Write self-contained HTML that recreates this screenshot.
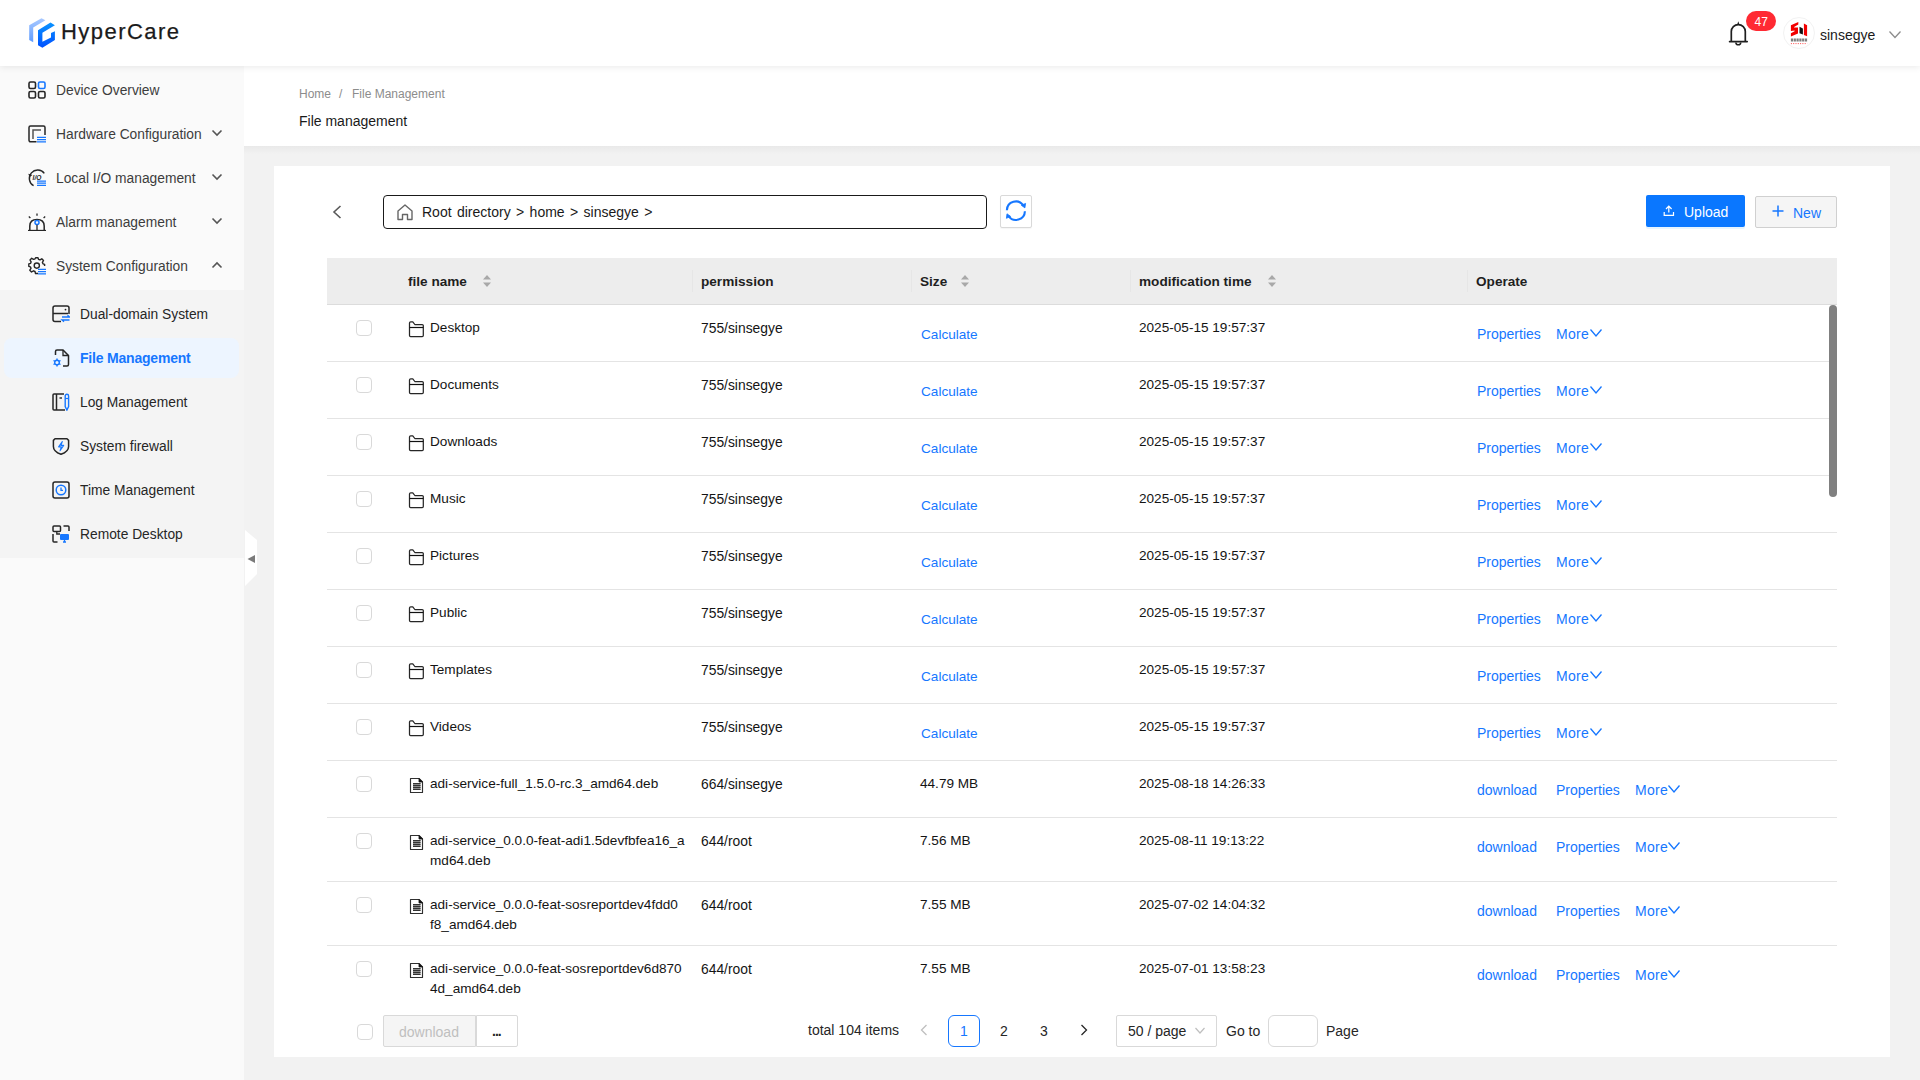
<!DOCTYPE html><html><head><meta charset="utf-8"><style>
html,body{margin:0;padding:0;width:1920px;height:1080px;overflow:hidden;background:#f2f2f2;font-family:"Liberation Sans", sans-serif;}
.t{position:absolute;white-space:nowrap;}
</style></head><body>
<div style="position:absolute;left:0px;top:66px;width:244px;height:1014px;background:#fafafa"></div>
<div style="position:absolute;left:0px;top:290px;width:244px;height:268px;background:#f4f4f4"></div>
<div style="position:absolute;left:244px;top:66px;width:1676px;height:80px;background:#fff"></div>
<div style="position:absolute;left:244px;top:146px;width:1676px;height:8px;background:linear-gradient(#e9e9e9,#f2f2f2)"></div>
<div style="position:absolute;left:0px;top:0px;width:1920px;height:66px;background:#fff;box-shadow:0 1px 7px rgba(0,0,0,0.09)"></div>
<svg style="position:absolute;left:26px;top:14px" width="34" height="38" viewBox="0 0 34 38" fill="none"><defs><linearGradient id="lg1" x1="0" y1="0" x2="0" y2="1"><stop offset="0" stop-color="#a9c9ff"/><stop offset="1" stop-color="#5e9cff"/></linearGradient>
<linearGradient id="lg2" x1="0" y1="0" x2="0" y2="1"><stop offset="0" stop-color="#0a93ff"/><stop offset="1" stop-color="#0050ff"/></linearGradient></defs>
<polygon fill="url(#lg1)" points="3.2,11.3 15.5,4.2 19.4,6.3 7.2,13.6 7.2,28.2 3.2,26"/>
<polygon fill="url(#lg2)" points="12,16.2 24.5,8.6 28.9,11.3 16.4,18.7 16.4,27.8 25,23.6 25,19 28.9,17.3 28.9,26 16.4,33.8 12,31.3"/></svg>
<div class="t" style="left:61px;top:21.00px;font-size:22px;line-height:22px;color:#1a1a1a;font-weight:normal;letter-spacing:1.45px;-webkit-text-stroke:0.25px #1a1a1a">HyperCare</div>
<svg style="position:absolute;left:1722px;top:8px" width="30" height="40" viewBox="0 0 30 40" fill="none"><path d="M9.3 33.6 V23.6 A7 7 0 0 1 23.3 23.6 V33.6" stroke="#1f1f1f" stroke-width="1.7"/>
<path d="M7.6 33.6 H25.2" stroke="#1f1f1f" stroke-width="1.7" stroke-linecap="round"/><path d="M15 16.9 L16.3 13.2 L17.6 16.9 Z" fill="#1f1f1f"/><path d="M13.9 34.4 A2.4 2.4 0 0 0 18.7 34.4" stroke="#1f1f1f" stroke-width="1.5"/></svg>
<div style="position:absolute;left:1746px;top:11px;width:29.5px;height:20px;background:#ff2a33;border-radius:10px"></div>
<div class="t" style="left:1754.5px;top:16.00px;font-size:12px;line-height:12px;color:#fff;font-weight:normal;">47</div>
<div style="position:absolute;left:1783px;top:17px;width:32px;height:32px;box-sizing:border-box;background:#fff;border-radius:50%;border:1px solid #f2f2f2"></div>
<svg style="position:absolute;left:1780px;top:14px" width="40" height="38" viewBox="0 0 40 38" fill="none"><path d="M10.9 11.3 L18.3 7.9 V10.6 L14.1 13 V13.6 L18 13.4 V19.5 L10.9 22.5 V19.2 L14.6 17.3 V16.4 L10.9 16.9 Z" fill="#f20000"/>
<path d="M19.5 12.7 L22.9 14.4 V20.6 L19.5 19.2 Z" fill="#111"/><path d="M23.9 9.5 L27.1 11.3 V22.2 L23.9 21.1 Z" fill="#f20000"/>
<path d="M10.9 25.9 H27.1" stroke="#666" stroke-width="3" stroke-dasharray="2.2,0.6" opacity="0.85"/><path d="M10.9 29.6 H27.1" stroke="#f33" stroke-width="0.9" stroke-dasharray="1,1.3"/></svg>
<div class="t" style="left:1820px;top:28.00px;font-size:14px;line-height:14px;color:#1a1a1a;font-weight:normal;">sinsegye</div>
<svg style="position:absolute;left:1888px;top:30px" width="14" height="10" viewBox="0 0 14 10" fill="none"><path d="M1.5 1.5 L7 7.5 L12.5 1.5" stroke="#8c8c8c" stroke-width="1.3"/></svg>
<div class="t" style="left:56px;top:84.00px;font-size:13.8px;line-height:13.8px;color:#3d3d3d;font-weight:normal;">Device Overview</div>
<div class="t" style="left:56px;top:128.00px;font-size:13.8px;line-height:13.8px;color:#3d3d3d;font-weight:normal;">Hardware Configuration</div>
<svg style="position:absolute;left:211px;top:129px" width="12" height="8"><path d="M1.5 1.5 L6 6 L10.5 1.5" fill="none" stroke="#555" stroke-width="1.6"/></svg>
<div class="t" style="left:56px;top:172.00px;font-size:13.8px;line-height:13.8px;color:#3d3d3d;font-weight:normal;">Local I/O management</div>
<svg style="position:absolute;left:211px;top:173px" width="12" height="8"><path d="M1.5 1.5 L6 6 L10.5 1.5" fill="none" stroke="#555" stroke-width="1.6"/></svg>
<div class="t" style="left:56px;top:216.00px;font-size:13.8px;line-height:13.8px;color:#3d3d3d;font-weight:normal;">Alarm management</div>
<svg style="position:absolute;left:211px;top:217px" width="12" height="8"><path d="M1.5 1.5 L6 6 L10.5 1.5" fill="none" stroke="#555" stroke-width="1.6"/></svg>
<div class="t" style="left:56px;top:260.00px;font-size:13.8px;line-height:13.8px;color:#3d3d3d;font-weight:normal;">System Configuration</div>
<svg style="position:absolute;left:211px;top:261px" width="12" height="8"><path d="M1.5 6.5 L6 2 L10.5 6.5" fill="none" stroke="#555" stroke-width="1.6"/></svg>
<svg style="position:absolute;left:28px;top:81px" width="18" height="18" viewBox="0 0 18 18" fill="none"><rect x="1" y="1" width="6.5" height="6.5" rx="1.5" stroke="#262626" stroke-width="1.6"/><rect x="10.5" y="1" width="6.5" height="6.5" rx="1.5" stroke="#1677ff" stroke-width="1.6"/>
<rect x="1" y="10.5" width="6.5" height="6.5" rx="1.5" stroke="#262626" stroke-width="1.6"/><rect x="10.5" y="10.5" width="6.5" height="6.5" rx="1.5" stroke="#262626" stroke-width="1.6"/></svg>
<svg style="position:absolute;left:28px;top:125px" width="18" height="18" viewBox="0 0 18 18" fill="none"><path d="M8.5 16.8 H2.5 A1.5 1.5 0 0 1 1 15.3 V2.5 A1.5 1.5 0 0 1 2.5 1 H15.5 A1.5 1.5 0 0 1 17 2.5 V10" stroke="#262626" stroke-width="1.5"/>
<path d="M5 14 V5 H13" stroke="#555" stroke-width="1.5"/><path d="M9 12.3 H18 M9 14.6 H18 M9 16.9 H18" stroke="#1677ff" stroke-width="1.25"/></svg>
<svg style="position:absolute;left:28px;top:169px" width="18" height="18" viewBox="0 0 18 18" fill="none"><path d="M16.3 4.4 A8.3 8.3 0 1 0 5.6 16.6" stroke="#262626" stroke-width="1.4"/><path d="M0.3 4.8 L1.6 8.2 L4.4 5.9 Z" fill="#262626"/>
<text x="4.6" y="10.6" font-size="6.6" font-weight="bold" fill="#262626" font-family="Liberation Sans" font-style="italic">I/O</text><path d="M9 12.1 H18 M9 14.2 H18 M9 16.3 H18" stroke="#1677ff" stroke-width="1.2"/></svg>
<svg style="position:absolute;left:28px;top:213px" width="18" height="18" viewBox="0 0 18 18" fill="none"><path d="M1.8 17.6 V13 C1.8 8.6 5 6.5 9 6.5 C13 6.5 16.2 8.6 16.2 13 V17.6" stroke="#262626" stroke-width="1.5"/><path d="M0 17.6 H18" stroke="#262626" stroke-width="1.5"/>
<path d="M9 0.5 V2.8 M0.8 3.6 L2.4 5 M17.2 3.6 L15.6 5" stroke="#262626" stroke-width="1.3"/><circle cx="9" cy="9.6" r="2" stroke="#1677ff" stroke-width="1.5"/><path d="M9 11.8 V17.6" stroke="#262626" stroke-width="1.3"/></svg>
<svg style="position:absolute;left:28px;top:257px" width="18" height="18" viewBox="0 0 18 18" fill="none"><path d="M10 16.5 L7.5 16.5 L7 14.5 L5.5 13.8 L3.5 15 L1.8 13.2 L3 11.3 L2.4 9.8 L0.8 9.3 V6.9 L2.5 6.4 L3.1 4.9 L2 3 L3.7 1.3 L5.6 2.4 L7.1 1.8 L7.6 0.8 H10 L10.5 2.3 L12 2.9 L13.8 1.8 L15.5 3.5 L14.4 5.4 L15 6.8 L16.6 7.3 V9" stroke="#262626" stroke-width="1.4" stroke-linejoin="round"/>
<circle cx="8.8" cy="8.6" r="2.6" stroke="#262626" stroke-width="1.4"/><path d="M10 12.3 H18 M10 14.6 H18 M10 16.9 H18" stroke="#1677ff" stroke-width="1.25"/></svg>
<div style="position:absolute;left:4px;top:338px;width:235px;height:40px;background:#edf5ff;border-radius:8px"></div>
<div class="t" style="left:80px;top:308.00px;font-size:13.8px;line-height:13.8px;color:#262626;font-weight:normal;">Dual-domain System</div>
<div class="t" style="left:80px;top:351.00px;font-size:14px;line-height:14px;color:#1677ff;font-weight:bold;letter-spacing:-0.2px">File Management</div>
<div class="t" style="left:80px;top:396.00px;font-size:13.8px;line-height:13.8px;color:#262626;font-weight:normal;">Log Management</div>
<div class="t" style="left:80px;top:440.00px;font-size:13.8px;line-height:13.8px;color:#262626;font-weight:normal;">System firewall</div>
<div class="t" style="left:80px;top:484.00px;font-size:13.8px;line-height:13.8px;color:#262626;font-weight:normal;">Time Management</div>
<div class="t" style="left:80px;top:528.00px;font-size:13.8px;line-height:13.8px;color:#262626;font-weight:normal;">Remote Desktop</div>
<svg style="position:absolute;left:52px;top:305px" width="18" height="18" viewBox="0 0 18 18" fill="none"><path d="M9 16.5 H3 A2 2 0 0 1 1 14.5 V3 A2 2 0 0 1 3 1 H15 A2 2 0 0 1 17 3 V9" stroke="#262626" stroke-width="1.5"/><path d="M1 8.5 H16" stroke="#262626" stroke-width="1.5"/><circle cx="13.5" cy="4.6" r="0.9" fill="#262626"/>
<path d="M10 12 H17.5 L15.5 10.2 M17.5 15 H10 L12 16.8" stroke="#1677ff" stroke-width="1.3"/></svg>
<svg style="position:absolute;left:52px;top:349px" width="18" height="18" viewBox="0 0 18 18" fill="none"><path d="M3.5 6 V2.5 A1.5 1.5 0 0 1 5 1 H11 L16.5 6.5 V15.5 A1.5 1.5 0 0 1 15 17 H11" stroke="#262626" stroke-width="1.5"/><path d="M11 1 V6.5 H16.5" stroke="#262626" stroke-width="1.3"/>
<path d="M5 9.5 V17.5 M1.5 11.5 L8.5 15.5 M1.5 15.5 L8.5 11.5" stroke="#1677ff" stroke-width="1.4"/><circle cx="5" cy="13.5" r="2.3" fill="#edf5ff" stroke="#1677ff" stroke-width="1.4"/></svg>
<svg style="position:absolute;left:52px;top:393px" width="18" height="18" viewBox="0 0 18 18" fill="none"><path d="M13 17 H2 A1 1 0 0 1 1 16 V2 A1 1 0 0 1 2 1 H12" stroke="#262626" stroke-width="1.5"/><path d="M4.5 1 V17" stroke="#262626" stroke-width="1.5"/><path d="M7.5 5 H10" stroke="#262626" stroke-width="1.4"/>
<path d="M13.2 3 A1.7 1.7 0 0 1 16.6 3 V13.5 L14.9 17 L13.2 13.5 Z" stroke="#1677ff" stroke-width="1.4"/><path d="M13.2 5.5 H16.6" stroke="#1677ff" stroke-width="1.2"/></svg>
<svg style="position:absolute;left:52px;top:437px" width="18" height="18" viewBox="0 0 18 18" fill="none"><path d="M3 1.8 H15 L16.6 3.4 V9.5 C16.6 13.3 13 15.9 9 17.3 C5 15.9 1.4 13.3 1.4 9.5 V3.4 Z" stroke="#262626" stroke-width="1.5" stroke-linejoin="round"/><path d="M10.3 4.6 L6.6 9.9 H9.3 L8 13.8 L11.7 8.4 H9 Z" stroke="#1677ff" stroke-width="1.1" stroke-linejoin="round"/></svg>
<svg style="position:absolute;left:52px;top:481px" width="18" height="18" viewBox="0 0 18 18" fill="none"><rect x="1" y="1" width="16" height="16" rx="2" stroke="#262626" stroke-width="1.5"/><circle cx="9" cy="9" r="4.8" stroke="#1677ff" stroke-width="1.5"/><path d="M9 6.5 V9.3 H11" stroke="#1677ff" stroke-width="1.3"/></svg>
<svg style="position:absolute;left:52px;top:525px" width="18" height="18" viewBox="0 0 18 18" fill="none"><rect x="1" y="1" width="7.5" height="5.5" rx="1" stroke="#262626" stroke-width="1.5"/><path d="M11.5 1 H16 A1 1 0 0 1 17 2 V6" stroke="#262626" stroke-width="1.5"/><path d="M1 9 V16 A1 1 0 0 0 2 17 H5.5" stroke="#262626" stroke-width="1.5"/>
<rect x="8" y="9" width="9" height="6" rx="1" fill="#1677ff"/><path d="M11 17 H14 M12.5 15 V17" stroke="#1677ff" stroke-width="1.3"/><path d="M4.8 6.5 V9 H8" stroke="#262626" stroke-width="1.3"/></svg>
<svg style="position:absolute;left:245px;top:530px" width="14" height="56" viewBox="0 0 14 56" fill="none"><path d="M0 0 L12 10 V44 L0 56 Z" fill="#fff"/><path d="M2.5 29 L10 25 V33 Z" fill="#7a7a7a"/></svg>
<div class="t" style="left:299px;top:88.00px;font-size:12px;line-height:12px;color:#8c8c8c;font-weight:normal;">Home</div>
<div class="t" style="left:339px;top:88.00px;font-size:12px;line-height:12px;color:#8c8c8c;font-weight:normal;">/</div>
<div class="t" style="left:352px;top:88.00px;font-size:12px;line-height:12px;color:#8c8c8c;font-weight:normal;">File Management</div>
<div class="t" style="left:299px;top:114.00px;font-size:14px;line-height:14px;color:#1a1a1a;font-weight:normal;">File management</div>
<div style="position:absolute;left:274px;top:166px;width:1616px;height:891px;background:#fff"></div>
<svg style="position:absolute;left:330px;top:204px" width="14" height="16" viewBox="0 0 14 16" fill="none"><path d="M10.5 2 L4 8 L10.5 14" stroke="#595959" stroke-width="1.6"/></svg>
<div style="position:absolute;left:383px;top:195px;width:602px;height:32px;border:1.5px solid #1a1a1a;border-radius:4px;background:#fff"></div>
<svg style="position:absolute;left:396px;top:203px" width="18" height="18" viewBox="0 0 18 18" fill="none"><path d="M2 16.5 V8 L9 2 L16 8 V16.5 H11.5 V11.5 H6.5 V16.5 Z" stroke="#666" stroke-width="1.4" stroke-linejoin="round"/></svg>
<div class="t" style="left:422px;top:205.00px;font-size:14px;line-height:14px;color:#1a1a1a;font-weight:normal;word-spacing:1.5px">Root directory &gt; home &gt; sinsegye &gt;</div>
<div style="position:absolute;left:1000px;top:195px;width:30px;height:31px;border:1px solid #d9d9d9;border-radius:2px;background:#fff;box-shadow:0 1px 1px rgba(0,0,0,0.04)"></div>
<svg style="position:absolute;left:1004px;top:199px" width="24" height="24" viewBox="0 0 24 24" fill="none"><path d="M2.9 11.2 A8.9 8.9 0 0 1 19.3 6.6" stroke="#1677ff" stroke-width="2.1"/><path d="M20.9 12.3 A8.9 8.9 0 0 1 4.6 17" stroke="#1677ff" stroke-width="2.1"/><path d="M17.3 6.2 L21.6 4.4 L20.9 8.9 Z" fill="#1677ff" stroke="#1677ff" stroke-width="0.8" stroke-linejoin="round"/><path d="M6.6 17.4 L2.4 19.3 L3 14.8 Z" fill="#1677ff" stroke="#1677ff" stroke-width="0.8" stroke-linejoin="round"/></svg>
<div style="position:absolute;left:1646px;top:195px;width:99px;height:32px;background:#0a77ff;border-radius:2px;box-shadow:0 2px 0 rgba(5,145,255,0.1)"></div>
<svg style="position:absolute;left:1660px;top:200px" width="20" height="20" viewBox="0 0 20 20" fill="none"><path d="M8.8 12.6 V6.3 M6 9 L8.8 6.2 L11.6 9" stroke="#fff" stroke-width="1.2"/><path d="M4.2 12 V15.4 H13.5 V12" stroke="#fff" stroke-width="1.2"/></svg>
<div class="t" style="left:1684px;top:205.00px;font-size:14px;line-height:14px;color:#fff;font-weight:normal;">Upload</div>
<div style="position:absolute;left:1755px;top:196px;width:80px;height:30px;background:#f5f5f5;border:1px solid #d0d0d0;border-radius:2px"></div>
<svg style="position:absolute;left:1771px;top:204px" width="14" height="14" viewBox="0 0 14 14" fill="none"><path d="M7 1.5 V12.5 M1.5 7 H12.5" stroke="#1677ff" stroke-width="1.5"/></svg>
<div class="t" style="left:1793px;top:206.00px;font-size:14px;line-height:14px;color:#1677ff;font-weight:normal;">New</div>
<div style="position:absolute;left:327px;top:258px;width:1510px;height:46px;background:#ededed"></div>
<div style="position:absolute;left:327px;top:304px;width:1510px;height:1px;background:#dcdcdc"></div>
<div style="position:absolute;left:692px;top:270px;width:1px;height:22px;background:#e6e6e6"></div>
<div style="position:absolute;left:911px;top:270px;width:1px;height:22px;background:#e6e6e6"></div>
<div style="position:absolute;left:1130px;top:270px;width:1px;height:22px;background:#e6e6e6"></div>
<div style="position:absolute;left:1467px;top:270px;width:1px;height:22px;background:#e6e6e6"></div>
<div class="t" style="left:408px;top:275.00px;font-size:13.6px;line-height:13.6px;color:#1f1f1f;font-weight:bold;">file name</div>
<svg style="position:absolute;left:482px;top:274px" width="10" height="14" viewBox="0 0 10 14" fill="none"><path d="M5 1 L9 5.5 H1 Z" fill="#a8a8a8"/><path d="M5 13 L9 8.5 H1 Z" fill="#a8a8a8"/></svg>
<div class="t" style="left:701px;top:275.00px;font-size:13.6px;line-height:13.6px;color:#1f1f1f;font-weight:bold;">permission</div>
<div class="t" style="left:920px;top:275.00px;font-size:13.6px;line-height:13.6px;color:#1f1f1f;font-weight:bold;">Size</div>
<svg style="position:absolute;left:960px;top:274px" width="10" height="14" viewBox="0 0 10 14" fill="none"><path d="M5 1 L9 5.5 H1 Z" fill="#a8a8a8"/><path d="M5 13 L9 8.5 H1 Z" fill="#a8a8a8"/></svg>
<div class="t" style="left:1139px;top:275.00px;font-size:13.6px;line-height:13.6px;color:#1f1f1f;font-weight:bold;">modification time</div>
<svg style="position:absolute;left:1267px;top:274px" width="10" height="14" viewBox="0 0 10 14" fill="none"><path d="M5 1 L9 5.5 H1 Z" fill="#a8a8a8"/><path d="M5 13 L9 8.5 H1 Z" fill="#a8a8a8"/></svg>
<div class="t" style="left:1476px;top:275.00px;font-size:13.6px;line-height:13.6px;color:#1f1f1f;font-weight:bold;">Operate</div>
<div style="position:absolute;left:327px;top:305px;width:1510px;height:704px;overflow:hidden">
<div style="position:absolute;left:29px;top:15px;width:16px;height:16px;box-sizing:border-box;border:1px solid #d9d9d9;border-radius:4px;background:#fff"></div>
<svg style="position:absolute;left:78px;top:11px" width="24" height="24" viewBox="0 0 24 24" fill="none"><path d="M4.5 7 Q4.5 5.8 5.7 5.8 H7.8 L9.8 8.5 H17.2 Q18.3 8.5 18.3 9.6 V19.5 Q18.3 20.6 17.2 20.6 H5.6 Q4.5 20.6 4.5 19.5 Z" stroke="#262626" stroke-width="1.25" stroke-linejoin="round"/><path d="M4.5 11.5 H18.3" stroke="#111" stroke-width="1.2"/></svg>
<div class="t" style="left:103px;top:16.00px;font-size:13.6px;line-height:13.6px;color:#141414;font-weight:normal;">Desktop</div>
<div class="t" style="left:374px;top:17.00px;font-size:13.85px;line-height:13.85px;color:#141414;font-weight:normal;">755/sinsegye</div>
<div class="t" style="left:594px;top:23.00px;font-size:13.6px;line-height:13.6px;color:#1677ff;font-weight:normal;">Calculate</div>
<div class="t" style="left:812px;top:16.00px;font-size:13.6px;line-height:13.6px;color:#141414;font-weight:normal;">2025-05-15 19:57:37</div>
<div class="t" style="left:1150px;top:22.00px;font-size:14px;line-height:14px;color:#1677ff;font-weight:normal;">Properties</div>
<div class="t" style="left:1229px;top:22.00px;font-size:14px;line-height:14px;color:#1677ff;font-weight:normal;letter-spacing:0.3px">More</div>
<svg style="position:absolute;left:1262px;top:23px" width="14" height="10" viewBox="0 0 14 10" fill="none"><path d="M1.5 1.5 L7 8 L12.5 1.5" stroke="#1677ff" stroke-width="1.3"/></svg>
<div style="position:absolute;left:0px;top:56px;width:1510px;height:1px;background:#e4e4e4"></div>
<div style="position:absolute;left:29px;top:72px;width:16px;height:16px;box-sizing:border-box;border:1px solid #d9d9d9;border-radius:4px;background:#fff"></div>
<svg style="position:absolute;left:78px;top:68px" width="24" height="24" viewBox="0 0 24 24" fill="none"><path d="M4.5 7 Q4.5 5.8 5.7 5.8 H7.8 L9.8 8.5 H17.2 Q18.3 8.5 18.3 9.6 V19.5 Q18.3 20.6 17.2 20.6 H5.6 Q4.5 20.6 4.5 19.5 Z" stroke="#262626" stroke-width="1.25" stroke-linejoin="round"/><path d="M4.5 11.5 H18.3" stroke="#111" stroke-width="1.2"/></svg>
<div class="t" style="left:103px;top:73.00px;font-size:13.6px;line-height:13.6px;color:#141414;font-weight:normal;">Documents</div>
<div class="t" style="left:374px;top:74.00px;font-size:13.85px;line-height:13.85px;color:#141414;font-weight:normal;">755/sinsegye</div>
<div class="t" style="left:594px;top:80.00px;font-size:13.6px;line-height:13.6px;color:#1677ff;font-weight:normal;">Calculate</div>
<div class="t" style="left:812px;top:73.00px;font-size:13.6px;line-height:13.6px;color:#141414;font-weight:normal;">2025-05-15 19:57:37</div>
<div class="t" style="left:1150px;top:79.00px;font-size:14px;line-height:14px;color:#1677ff;font-weight:normal;">Properties</div>
<div class="t" style="left:1229px;top:79.00px;font-size:14px;line-height:14px;color:#1677ff;font-weight:normal;letter-spacing:0.3px">More</div>
<svg style="position:absolute;left:1262px;top:80px" width="14" height="10" viewBox="0 0 14 10" fill="none"><path d="M1.5 1.5 L7 8 L12.5 1.5" stroke="#1677ff" stroke-width="1.3"/></svg>
<div style="position:absolute;left:0px;top:113px;width:1510px;height:1px;background:#e4e4e4"></div>
<div style="position:absolute;left:29px;top:129px;width:16px;height:16px;box-sizing:border-box;border:1px solid #d9d9d9;border-radius:4px;background:#fff"></div>
<svg style="position:absolute;left:78px;top:125px" width="24" height="24" viewBox="0 0 24 24" fill="none"><path d="M4.5 7 Q4.5 5.8 5.7 5.8 H7.8 L9.8 8.5 H17.2 Q18.3 8.5 18.3 9.6 V19.5 Q18.3 20.6 17.2 20.6 H5.6 Q4.5 20.6 4.5 19.5 Z" stroke="#262626" stroke-width="1.25" stroke-linejoin="round"/><path d="M4.5 11.5 H18.3" stroke="#111" stroke-width="1.2"/></svg>
<div class="t" style="left:103px;top:130.00px;font-size:13.6px;line-height:13.6px;color:#141414;font-weight:normal;">Downloads</div>
<div class="t" style="left:374px;top:131.00px;font-size:13.85px;line-height:13.85px;color:#141414;font-weight:normal;">755/sinsegye</div>
<div class="t" style="left:594px;top:137.00px;font-size:13.6px;line-height:13.6px;color:#1677ff;font-weight:normal;">Calculate</div>
<div class="t" style="left:812px;top:130.00px;font-size:13.6px;line-height:13.6px;color:#141414;font-weight:normal;">2025-05-15 19:57:37</div>
<div class="t" style="left:1150px;top:136.00px;font-size:14px;line-height:14px;color:#1677ff;font-weight:normal;">Properties</div>
<div class="t" style="left:1229px;top:136.00px;font-size:14px;line-height:14px;color:#1677ff;font-weight:normal;letter-spacing:0.3px">More</div>
<svg style="position:absolute;left:1262px;top:137px" width="14" height="10" viewBox="0 0 14 10" fill="none"><path d="M1.5 1.5 L7 8 L12.5 1.5" stroke="#1677ff" stroke-width="1.3"/></svg>
<div style="position:absolute;left:0px;top:170px;width:1510px;height:1px;background:#e4e4e4"></div>
<div style="position:absolute;left:29px;top:186px;width:16px;height:16px;box-sizing:border-box;border:1px solid #d9d9d9;border-radius:4px;background:#fff"></div>
<svg style="position:absolute;left:78px;top:182px" width="24" height="24" viewBox="0 0 24 24" fill="none"><path d="M4.5 7 Q4.5 5.8 5.7 5.8 H7.8 L9.8 8.5 H17.2 Q18.3 8.5 18.3 9.6 V19.5 Q18.3 20.6 17.2 20.6 H5.6 Q4.5 20.6 4.5 19.5 Z" stroke="#262626" stroke-width="1.25" stroke-linejoin="round"/><path d="M4.5 11.5 H18.3" stroke="#111" stroke-width="1.2"/></svg>
<div class="t" style="left:103px;top:187.00px;font-size:13.6px;line-height:13.6px;color:#141414;font-weight:normal;">Music</div>
<div class="t" style="left:374px;top:188.00px;font-size:13.85px;line-height:13.85px;color:#141414;font-weight:normal;">755/sinsegye</div>
<div class="t" style="left:594px;top:194.00px;font-size:13.6px;line-height:13.6px;color:#1677ff;font-weight:normal;">Calculate</div>
<div class="t" style="left:812px;top:187.00px;font-size:13.6px;line-height:13.6px;color:#141414;font-weight:normal;">2025-05-15 19:57:37</div>
<div class="t" style="left:1150px;top:193.00px;font-size:14px;line-height:14px;color:#1677ff;font-weight:normal;">Properties</div>
<div class="t" style="left:1229px;top:193.00px;font-size:14px;line-height:14px;color:#1677ff;font-weight:normal;letter-spacing:0.3px">More</div>
<svg style="position:absolute;left:1262px;top:194px" width="14" height="10" viewBox="0 0 14 10" fill="none"><path d="M1.5 1.5 L7 8 L12.5 1.5" stroke="#1677ff" stroke-width="1.3"/></svg>
<div style="position:absolute;left:0px;top:227px;width:1510px;height:1px;background:#e4e4e4"></div>
<div style="position:absolute;left:29px;top:243px;width:16px;height:16px;box-sizing:border-box;border:1px solid #d9d9d9;border-radius:4px;background:#fff"></div>
<svg style="position:absolute;left:78px;top:239px" width="24" height="24" viewBox="0 0 24 24" fill="none"><path d="M4.5 7 Q4.5 5.8 5.7 5.8 H7.8 L9.8 8.5 H17.2 Q18.3 8.5 18.3 9.6 V19.5 Q18.3 20.6 17.2 20.6 H5.6 Q4.5 20.6 4.5 19.5 Z" stroke="#262626" stroke-width="1.25" stroke-linejoin="round"/><path d="M4.5 11.5 H18.3" stroke="#111" stroke-width="1.2"/></svg>
<div class="t" style="left:103px;top:244.00px;font-size:13.6px;line-height:13.6px;color:#141414;font-weight:normal;">Pictures</div>
<div class="t" style="left:374px;top:245.00px;font-size:13.85px;line-height:13.85px;color:#141414;font-weight:normal;">755/sinsegye</div>
<div class="t" style="left:594px;top:251.00px;font-size:13.6px;line-height:13.6px;color:#1677ff;font-weight:normal;">Calculate</div>
<div class="t" style="left:812px;top:244.00px;font-size:13.6px;line-height:13.6px;color:#141414;font-weight:normal;">2025-05-15 19:57:37</div>
<div class="t" style="left:1150px;top:250.00px;font-size:14px;line-height:14px;color:#1677ff;font-weight:normal;">Properties</div>
<div class="t" style="left:1229px;top:250.00px;font-size:14px;line-height:14px;color:#1677ff;font-weight:normal;letter-spacing:0.3px">More</div>
<svg style="position:absolute;left:1262px;top:251px" width="14" height="10" viewBox="0 0 14 10" fill="none"><path d="M1.5 1.5 L7 8 L12.5 1.5" stroke="#1677ff" stroke-width="1.3"/></svg>
<div style="position:absolute;left:0px;top:284px;width:1510px;height:1px;background:#e4e4e4"></div>
<div style="position:absolute;left:29px;top:300px;width:16px;height:16px;box-sizing:border-box;border:1px solid #d9d9d9;border-radius:4px;background:#fff"></div>
<svg style="position:absolute;left:78px;top:296px" width="24" height="24" viewBox="0 0 24 24" fill="none"><path d="M4.5 7 Q4.5 5.8 5.7 5.8 H7.8 L9.8 8.5 H17.2 Q18.3 8.5 18.3 9.6 V19.5 Q18.3 20.6 17.2 20.6 H5.6 Q4.5 20.6 4.5 19.5 Z" stroke="#262626" stroke-width="1.25" stroke-linejoin="round"/><path d="M4.5 11.5 H18.3" stroke="#111" stroke-width="1.2"/></svg>
<div class="t" style="left:103px;top:301.00px;font-size:13.6px;line-height:13.6px;color:#141414;font-weight:normal;">Public</div>
<div class="t" style="left:374px;top:302.00px;font-size:13.85px;line-height:13.85px;color:#141414;font-weight:normal;">755/sinsegye</div>
<div class="t" style="left:594px;top:308.00px;font-size:13.6px;line-height:13.6px;color:#1677ff;font-weight:normal;">Calculate</div>
<div class="t" style="left:812px;top:301.00px;font-size:13.6px;line-height:13.6px;color:#141414;font-weight:normal;">2025-05-15 19:57:37</div>
<div class="t" style="left:1150px;top:307.00px;font-size:14px;line-height:14px;color:#1677ff;font-weight:normal;">Properties</div>
<div class="t" style="left:1229px;top:307.00px;font-size:14px;line-height:14px;color:#1677ff;font-weight:normal;letter-spacing:0.3px">More</div>
<svg style="position:absolute;left:1262px;top:308px" width="14" height="10" viewBox="0 0 14 10" fill="none"><path d="M1.5 1.5 L7 8 L12.5 1.5" stroke="#1677ff" stroke-width="1.3"/></svg>
<div style="position:absolute;left:0px;top:341px;width:1510px;height:1px;background:#e4e4e4"></div>
<div style="position:absolute;left:29px;top:357px;width:16px;height:16px;box-sizing:border-box;border:1px solid #d9d9d9;border-radius:4px;background:#fff"></div>
<svg style="position:absolute;left:78px;top:353px" width="24" height="24" viewBox="0 0 24 24" fill="none"><path d="M4.5 7 Q4.5 5.8 5.7 5.8 H7.8 L9.8 8.5 H17.2 Q18.3 8.5 18.3 9.6 V19.5 Q18.3 20.6 17.2 20.6 H5.6 Q4.5 20.6 4.5 19.5 Z" stroke="#262626" stroke-width="1.25" stroke-linejoin="round"/><path d="M4.5 11.5 H18.3" stroke="#111" stroke-width="1.2"/></svg>
<div class="t" style="left:103px;top:358.00px;font-size:13.6px;line-height:13.6px;color:#141414;font-weight:normal;">Templates</div>
<div class="t" style="left:374px;top:359.00px;font-size:13.85px;line-height:13.85px;color:#141414;font-weight:normal;">755/sinsegye</div>
<div class="t" style="left:594px;top:365.00px;font-size:13.6px;line-height:13.6px;color:#1677ff;font-weight:normal;">Calculate</div>
<div class="t" style="left:812px;top:358.00px;font-size:13.6px;line-height:13.6px;color:#141414;font-weight:normal;">2025-05-15 19:57:37</div>
<div class="t" style="left:1150px;top:364.00px;font-size:14px;line-height:14px;color:#1677ff;font-weight:normal;">Properties</div>
<div class="t" style="left:1229px;top:364.00px;font-size:14px;line-height:14px;color:#1677ff;font-weight:normal;letter-spacing:0.3px">More</div>
<svg style="position:absolute;left:1262px;top:365px" width="14" height="10" viewBox="0 0 14 10" fill="none"><path d="M1.5 1.5 L7 8 L12.5 1.5" stroke="#1677ff" stroke-width="1.3"/></svg>
<div style="position:absolute;left:0px;top:398px;width:1510px;height:1px;background:#e4e4e4"></div>
<div style="position:absolute;left:29px;top:414px;width:16px;height:16px;box-sizing:border-box;border:1px solid #d9d9d9;border-radius:4px;background:#fff"></div>
<svg style="position:absolute;left:78px;top:410px" width="24" height="24" viewBox="0 0 24 24" fill="none"><path d="M4.5 7 Q4.5 5.8 5.7 5.8 H7.8 L9.8 8.5 H17.2 Q18.3 8.5 18.3 9.6 V19.5 Q18.3 20.6 17.2 20.6 H5.6 Q4.5 20.6 4.5 19.5 Z" stroke="#262626" stroke-width="1.25" stroke-linejoin="round"/><path d="M4.5 11.5 H18.3" stroke="#111" stroke-width="1.2"/></svg>
<div class="t" style="left:103px;top:415.00px;font-size:13.6px;line-height:13.6px;color:#141414;font-weight:normal;">Videos</div>
<div class="t" style="left:374px;top:416.00px;font-size:13.85px;line-height:13.85px;color:#141414;font-weight:normal;">755/sinsegye</div>
<div class="t" style="left:594px;top:422.00px;font-size:13.6px;line-height:13.6px;color:#1677ff;font-weight:normal;">Calculate</div>
<div class="t" style="left:812px;top:415.00px;font-size:13.6px;line-height:13.6px;color:#141414;font-weight:normal;">2025-05-15 19:57:37</div>
<div class="t" style="left:1150px;top:421.00px;font-size:14px;line-height:14px;color:#1677ff;font-weight:normal;">Properties</div>
<div class="t" style="left:1229px;top:421.00px;font-size:14px;line-height:14px;color:#1677ff;font-weight:normal;letter-spacing:0.3px">More</div>
<svg style="position:absolute;left:1262px;top:422px" width="14" height="10" viewBox="0 0 14 10" fill="none"><path d="M1.5 1.5 L7 8 L12.5 1.5" stroke="#1677ff" stroke-width="1.3"/></svg>
<div style="position:absolute;left:0px;top:455px;width:1510px;height:1px;background:#e4e4e4"></div>
<div style="position:absolute;left:29px;top:471px;width:16px;height:16px;box-sizing:border-box;border:1px solid #d9d9d9;border-radius:4px;background:#fff"></div>
<svg style="position:absolute;left:78px;top:469px" width="24" height="24" viewBox="0 0 24 24" fill="none"><path d="M5.5 4.5 H14 L17.5 8 V18.5 H5.5 Z" stroke="#303030" stroke-width="1.15" stroke-linejoin="round"/><path d="M14 4.5 V8 H17.5 Z" fill="#111" stroke="#111" stroke-width="0.8" stroke-linejoin="round"/><rect x="8" y="9" width="7.5" height="7" fill="#8a8a8a"/><path d="M8 9.5 H15.5 M8 11.5 H15.5 M8 13.5 H15.5 M8 15.5 H15.5" stroke="#333" stroke-width="1"/></svg>
<div class="t" style="left:103px;top:472.00px;font-size:13.6px;line-height:13.6px;color:#141414;font-weight:normal;">adi-service-full_1.5.0-rc.3_amd64.deb</div>
<div class="t" style="left:374px;top:473.00px;font-size:13.85px;line-height:13.85px;color:#141414;font-weight:normal;">664/sinsegye</div>
<div class="t" style="left:593px;top:472.00px;font-size:13.6px;line-height:13.6px;color:#141414;font-weight:normal;">44.79 MB</div>
<div class="t" style="left:812px;top:472.00px;font-size:13.6px;line-height:13.6px;color:#141414;font-weight:normal;">2025-08-18 14:26:33</div>
<div class="t" style="left:1150px;top:478.00px;font-size:14px;line-height:14px;color:#1677ff;font-weight:normal;">download</div>
<div class="t" style="left:1229px;top:478.00px;font-size:14px;line-height:14px;color:#1677ff;font-weight:normal;">Properties</div>
<div class="t" style="left:1308px;top:478.00px;font-size:14px;line-height:14px;color:#1677ff;font-weight:normal;letter-spacing:0.3px">More</div>
<svg style="position:absolute;left:1340px;top:479px" width="14" height="10" viewBox="0 0 14 10" fill="none"><path d="M1.5 1.5 L7 8 L12.5 1.5" stroke="#1677ff" stroke-width="1.3"/></svg>
<div style="position:absolute;left:0px;top:512px;width:1510px;height:1px;background:#e4e4e4"></div>
<div style="position:absolute;left:29px;top:528px;width:16px;height:16px;box-sizing:border-box;border:1px solid #d9d9d9;border-radius:4px;background:#fff"></div>
<svg style="position:absolute;left:78px;top:526px" width="24" height="24" viewBox="0 0 24 24" fill="none"><path d="M5.5 4.5 H14 L17.5 8 V18.5 H5.5 Z" stroke="#303030" stroke-width="1.15" stroke-linejoin="round"/><path d="M14 4.5 V8 H17.5 Z" fill="#111" stroke="#111" stroke-width="0.8" stroke-linejoin="round"/><rect x="8" y="9" width="7.5" height="7" fill="#8a8a8a"/><path d="M8 9.5 H15.5 M8 11.5 H15.5 M8 13.5 H15.5 M8 15.5 H15.5" stroke="#333" stroke-width="1"/></svg>
<div class="t" style="left:103px;top:529.00px;font-size:13.6px;line-height:13.6px;color:#141414;font-weight:normal;">adi-service_0.0.0-feat-adi1.5devfbfea16_a</div>
<div class="t" style="left:103px;top:549.00px;font-size:13.6px;line-height:13.6px;color:#141414;font-weight:normal;">md64.deb</div>
<div class="t" style="left:374px;top:530.00px;font-size:13.85px;line-height:13.85px;color:#141414;font-weight:normal;">644/root</div>
<div class="t" style="left:593px;top:529.00px;font-size:13.6px;line-height:13.6px;color:#141414;font-weight:normal;">7.56 MB</div>
<div class="t" style="left:812px;top:529.00px;font-size:13.6px;line-height:13.6px;color:#141414;font-weight:normal;">2025-08-11 19:13:22</div>
<div class="t" style="left:1150px;top:535.00px;font-size:14px;line-height:14px;color:#1677ff;font-weight:normal;">download</div>
<div class="t" style="left:1229px;top:535.00px;font-size:14px;line-height:14px;color:#1677ff;font-weight:normal;">Properties</div>
<div class="t" style="left:1308px;top:535.00px;font-size:14px;line-height:14px;color:#1677ff;font-weight:normal;letter-spacing:0.3px">More</div>
<svg style="position:absolute;left:1340px;top:536px" width="14" height="10" viewBox="0 0 14 10" fill="none"><path d="M1.5 1.5 L7 8 L12.5 1.5" stroke="#1677ff" stroke-width="1.3"/></svg>
<div style="position:absolute;left:0px;top:576px;width:1510px;height:1px;background:#e4e4e4"></div>
<div style="position:absolute;left:29px;top:592px;width:16px;height:16px;box-sizing:border-box;border:1px solid #d9d9d9;border-radius:4px;background:#fff"></div>
<svg style="position:absolute;left:78px;top:590px" width="24" height="24" viewBox="0 0 24 24" fill="none"><path d="M5.5 4.5 H14 L17.5 8 V18.5 H5.5 Z" stroke="#303030" stroke-width="1.15" stroke-linejoin="round"/><path d="M14 4.5 V8 H17.5 Z" fill="#111" stroke="#111" stroke-width="0.8" stroke-linejoin="round"/><rect x="8" y="9" width="7.5" height="7" fill="#8a8a8a"/><path d="M8 9.5 H15.5 M8 11.5 H15.5 M8 13.5 H15.5 M8 15.5 H15.5" stroke="#333" stroke-width="1"/></svg>
<div class="t" style="left:103px;top:593.00px;font-size:13.6px;line-height:13.6px;color:#141414;font-weight:normal;">adi-service_0.0.0-feat-sosreportdev4fdd0</div>
<div class="t" style="left:103px;top:613.00px;font-size:13.6px;line-height:13.6px;color:#141414;font-weight:normal;">f8_amd64.deb</div>
<div class="t" style="left:374px;top:594.00px;font-size:13.85px;line-height:13.85px;color:#141414;font-weight:normal;">644/root</div>
<div class="t" style="left:593px;top:593.00px;font-size:13.6px;line-height:13.6px;color:#141414;font-weight:normal;">7.55 MB</div>
<div class="t" style="left:812px;top:593.00px;font-size:13.6px;line-height:13.6px;color:#141414;font-weight:normal;">2025-07-02 14:04:32</div>
<div class="t" style="left:1150px;top:599.00px;font-size:14px;line-height:14px;color:#1677ff;font-weight:normal;">download</div>
<div class="t" style="left:1229px;top:599.00px;font-size:14px;line-height:14px;color:#1677ff;font-weight:normal;">Properties</div>
<div class="t" style="left:1308px;top:599.00px;font-size:14px;line-height:14px;color:#1677ff;font-weight:normal;letter-spacing:0.3px">More</div>
<svg style="position:absolute;left:1340px;top:600px" width="14" height="10" viewBox="0 0 14 10" fill="none"><path d="M1.5 1.5 L7 8 L12.5 1.5" stroke="#1677ff" stroke-width="1.3"/></svg>
<div style="position:absolute;left:0px;top:640px;width:1510px;height:1px;background:#e4e4e4"></div>
<div style="position:absolute;left:29px;top:656px;width:16px;height:16px;box-sizing:border-box;border:1px solid #d9d9d9;border-radius:4px;background:#fff"></div>
<svg style="position:absolute;left:78px;top:654px" width="24" height="24" viewBox="0 0 24 24" fill="none"><path d="M5.5 4.5 H14 L17.5 8 V18.5 H5.5 Z" stroke="#303030" stroke-width="1.15" stroke-linejoin="round"/><path d="M14 4.5 V8 H17.5 Z" fill="#111" stroke="#111" stroke-width="0.8" stroke-linejoin="round"/><rect x="8" y="9" width="7.5" height="7" fill="#8a8a8a"/><path d="M8 9.5 H15.5 M8 11.5 H15.5 M8 13.5 H15.5 M8 15.5 H15.5" stroke="#333" stroke-width="1"/></svg>
<div class="t" style="left:103px;top:657.00px;font-size:13.6px;line-height:13.6px;color:#141414;font-weight:normal;">adi-service_0.0.0-feat-sosreportdev6d870</div>
<div class="t" style="left:103px;top:677.00px;font-size:13.6px;line-height:13.6px;color:#141414;font-weight:normal;">4d_amd64.deb</div>
<div class="t" style="left:374px;top:658.00px;font-size:13.85px;line-height:13.85px;color:#141414;font-weight:normal;">644/root</div>
<div class="t" style="left:593px;top:657.00px;font-size:13.6px;line-height:13.6px;color:#141414;font-weight:normal;">7.55 MB</div>
<div class="t" style="left:812px;top:657.00px;font-size:13.6px;line-height:13.6px;color:#141414;font-weight:normal;">2025-07-01 13:58:23</div>
<div class="t" style="left:1150px;top:663.00px;font-size:14px;line-height:14px;color:#1677ff;font-weight:normal;">download</div>
<div class="t" style="left:1229px;top:663.00px;font-size:14px;line-height:14px;color:#1677ff;font-weight:normal;">Properties</div>
<div class="t" style="left:1308px;top:663.00px;font-size:14px;line-height:14px;color:#1677ff;font-weight:normal;letter-spacing:0.3px">More</div>
<svg style="position:absolute;left:1340px;top:664px" width="14" height="10" viewBox="0 0 14 10" fill="none"><path d="M1.5 1.5 L7 8 L12.5 1.5" stroke="#1677ff" stroke-width="1.3"/></svg>
<div style="position:absolute;left:0px;top:704px;width:1510px;height:1px;background:#e4e4e4"></div>
<div style="position:absolute;left:1502px;top:0px;width:8px;height:192px;background:#808080;border-radius:4px"></div>
</div>
<div style="position:absolute;left:357px;top:1024px;width:16px;height:16px;box-sizing:border-box;border:1px solid #d9d9d9;border-radius:4px;background:#fff"></div>
<div style="position:absolute;left:383px;top:1015px;width:93px;height:32px;box-sizing:border-box;background:#f5f5f5;border:1px solid #d9d9d9;border-radius:2px 0 0 2px"></div>
<div class="t" style="left:399px;top:1025.00px;font-size:14px;line-height:14px;color:#bfbfbf;font-weight:normal;">download</div>
<div style="position:absolute;left:476px;top:1015px;width:42px;height:32px;box-sizing:border-box;background:#fff;border:1px solid #d9d9d9;border-radius:0 2px 2px 0"></div>
<div class="t" style="left:492px;top:1024.00px;font-size:14px;line-height:14px;color:#1f1f1f;font-weight:bold;letter-spacing:-1px">...</div>
<div class="t" style="left:808px;top:1023.00px;font-size:14px;line-height:14px;color:#262626;font-weight:normal;">total 104 items</div>
<svg style="position:absolute;left:918px;top:1023px" width="12" height="14" viewBox="0 0 12 14" fill="none"><path d="M8.5 2 L3.5 7 L8.5 12" stroke="#bfbfbf" stroke-width="1.3"/></svg>
<div style="position:absolute;left:948px;top:1015px;width:32px;height:32px;box-sizing:border-box;border:1px solid #1677ff;border-radius:6px;background:#fff"></div>
<div class="t" style="left:960px;top:1024.00px;font-size:14px;line-height:14px;color:#1677ff;font-weight:normal;">1</div>
<div class="t" style="left:1000px;top:1024.00px;font-size:14px;line-height:14px;color:#262626;font-weight:normal;">2</div>
<div class="t" style="left:1040px;top:1024.00px;font-size:14px;line-height:14px;color:#262626;font-weight:normal;">3</div>
<svg style="position:absolute;left:1078px;top:1023px" width="12" height="14" viewBox="0 0 12 14" fill="none"><path d="M3.5 2 L8.5 7 L3.5 12" stroke="#262626" stroke-width="1.3"/></svg>
<div style="position:absolute;left:1116px;top:1015px;width:101px;height:32px;box-sizing:border-box;border:1px solid #d9d9d9;border-radius:2px;background:#fff"></div>
<div class="t" style="left:1128px;top:1024.00px;font-size:14px;line-height:14px;color:#262626;font-weight:normal;">50 / page</div>
<svg style="position:absolute;left:1194px;top:1026px" width="12" height="10" viewBox="0 0 12 10" fill="none"><path d="M1.5 2 L6 7 L10.5 2" stroke="#bfbfbf" stroke-width="1.2"/></svg>
<div class="t" style="left:1226px;top:1024.00px;font-size:14px;line-height:14px;color:#262626;font-weight:normal;">Go to</div>
<div style="position:absolute;left:1268px;top:1015px;width:50px;height:32px;box-sizing:border-box;border:1px solid #d9d9d9;border-radius:6px;background:#fff"></div>
<div class="t" style="left:1326px;top:1024.00px;font-size:14px;line-height:14px;color:#262626;font-weight:normal;">Page</div>
</body></html>
